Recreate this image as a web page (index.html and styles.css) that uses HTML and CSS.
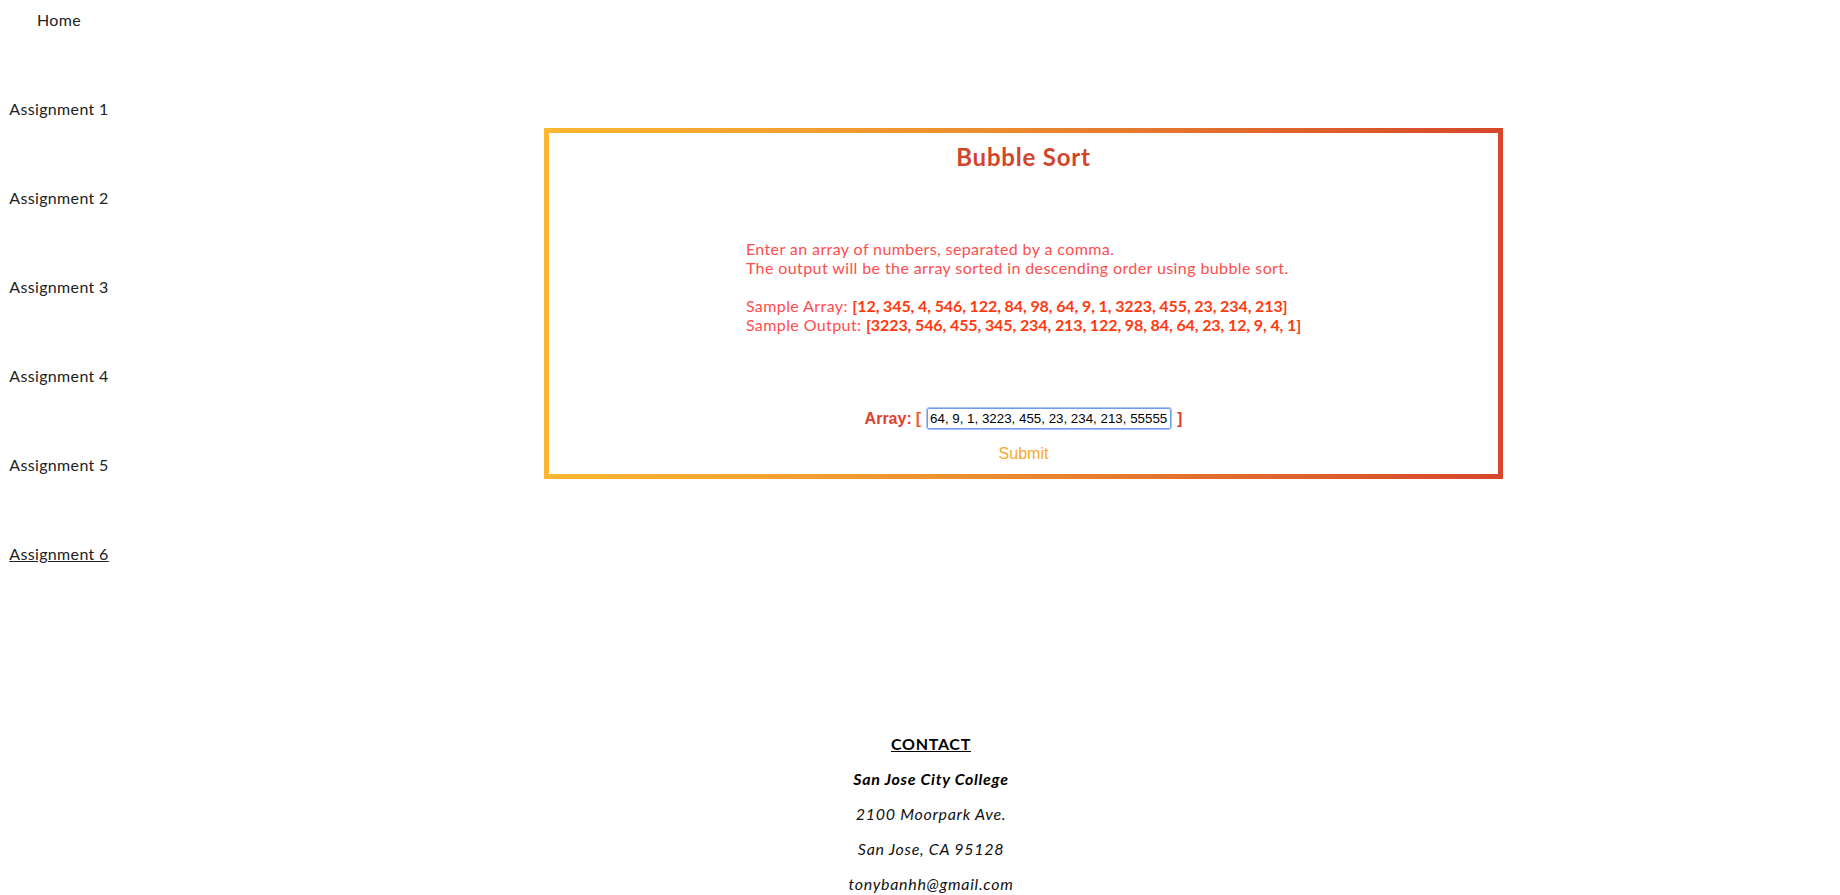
FILE: index.html
```html
<!DOCTYPE html>
<html>
<head>
<meta charset="utf-8">
<title>Bubble Sort</title>
<link rel="stylesheet" href="styles.css">
</head>
<body>
<div class="page">
  <nav class="nav">
    <a class="nav-link" href="#">Home</a>
    <a class="nav-link" href="#">Assignment 1</a>
    <a class="nav-link" href="#">Assignment 2</a>
    <a class="nav-link" href="#">Assignment 3</a>
    <a class="nav-link" href="#">Assignment 4</a>
    <a class="nav-link" href="#">Assignment 5</a>
    <a class="nav-link active" href="#">Assignment 6</a>
  </nav>
  <main class="main">
    <section class="box">
      <h2 class="title">Bubble Sort</h2>
      <div class="desc-wrap">
        <div class="desc">
          <p class="desc-line">Enter an array of numbers, separated by a comma.</p>
          <p class="desc-line">The output will be the array sorted in descending order using bubble sort.</p>
          <p class="desc-line blank">&nbsp;</p>
          <p class="desc-line">Sample Array: <b class="num">[12, 345, 4, 546, 122, 84, 98, 64, 9, 1, 3223, 455, 23, 234, 213]</b></p>
          <p class="desc-line">Sample Output: <b class="num">[3223, 546, 455, 345, 234, 213, 122, 98, 84, 64, 23, 12, 9, 4, 1]</b></p>
        </div>
      </div>
      <div class="array-row">
        <span class="label">Array:</span> <span class="bracket">[</span>
        <input class="array-input" type="text" value="64, 9, 1, 3223, 455, 23, 234, 213, 55555">
        <span class="bracket-close">]</span>
      </div>
      <div class="submit-row">
        <button class="submit" type="button">Submit</button>
      </div>
    </section>
  </main>
</div>
<footer class="footer">
  <p class="f-line f-head">CONTACT</p>
  <p class="f-line f-school">San Jose City College</p>
  <p class="f-line f-it">2100 Moorpark Ave.</p>
  <p class="f-line f-it">San Jose, CA 95128</p>
  <p class="f-line f-it">tonybanhh@gmail.com</p>
</footer>
</body>
</html>
```
FILE: styles.css
```css
html, body {
  margin: 0;
  padding: 0;
  background: #fff;
}
body {
  font-family: Lato, "Open Sans", sans-serif;
  color: #222;
}
.page {
  display: flex;
  align-items: flex-start;
}
.nav {
  width: 118px;
  display: flex;
  flex-direction: column;
  align-items: center;
  gap: 71px;
  padding-top: 11px;
}
.nav-link {
  font-size: 16px;
  line-height: 18px;
  letter-spacing: 0.35px;
  font-weight: 400;
  color: #222;
  text-decoration: none;
  white-space: nowrap;
}
.nav-link.active {
  text-decoration: underline;
}
.main {
  flex: 1;
  padding-top: 128px;
  padding-left: 426px;
}
.box {
  width: 949px;
  border: 5px solid;
  border-image: linear-gradient(to right, #fbb731, #ec8e2f 45%, #d6472b) 1;
  padding: 9px 0 11px;
  text-align: center;
}
.title {
  margin: 0;
  font-size: 24px;
  line-height: 30px;
  font-weight: 700;
  letter-spacing: 0.8px;
  color: #d3452b;
}
.desc-wrap {
  margin-top: 67px;
  text-align: center;
}
.desc {
  display: inline-block;
  text-align: left;
}
.desc-line {
  margin: 0;
  font-size: 16px;
  line-height: 19px;
  letter-spacing: 0.4px;
  color: #ff4d4d;
  font-weight: 400;
}
.num {
  color: #ff3a0f;
  font-weight: 700;
  letter-spacing: -0.1px;
}
.array-row {
  margin-top: 74px;
  display: flex;
  justify-content: center;
  align-items: center;
  gap: 4px;
  font-family: "Liberation Sans", Arial, sans-serif;
  font-size: 16px;
  font-weight: 700;
  height: 21px;
}
.label {
  color: #e2402f;
}
.bracket {
  color: #f0591f;
}
.bracket-close {
  color: #e53b2c;
  margin-left: 2px;
}
.array-input {
  box-sizing: border-box;
  width: 244px;
  height: 21px;
  margin: 0 0 0 2px;
  padding: 1px 1px 1px 2px;
  border: 1px solid #6f9be8;
  border-radius: 2px;
  outline: 1px solid #a7c3f2;
  font-family: "Liberation Sans", Arial, sans-serif;
  font-size: 13.33px;
  color: #000;
}
.submit-row {
  margin-top: 14px;
}
.submit {
  border: none;
  background: none;
  padding: 0;
  font-family: "Liberation Sans", Arial, sans-serif;
  font-size: 16px;
  line-height: 18px;
  color: #f8a72a;
}
.footer {
  margin-top: 163px;
  padding-left: 22px;
  text-align: center;
  color: #000;
}
.f-line {
  margin: 0;
  font-size: 16px;
  line-height: 35px;
  letter-spacing: 0.7px;
}
.f-head {
  font-weight: 700;
  text-decoration: underline;
}
.f-school {
  font-weight: 700;
  font-style: italic;
}
.f-it {
  font-style: italic;
  font-weight: 400;
  color: #111;
}
```
